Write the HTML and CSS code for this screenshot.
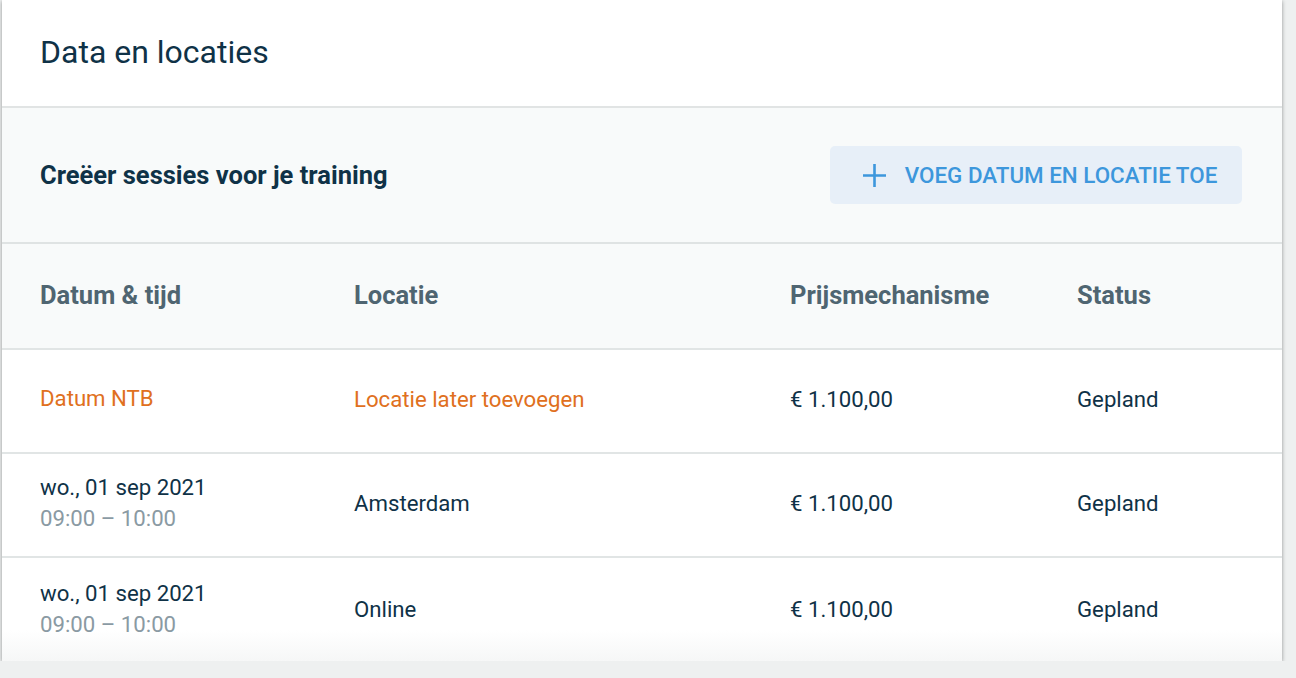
FILE: index.html
```html
<!DOCTYPE html>
<html lang="nl">
<head>
<meta charset="utf-8">
<link rel="stylesheet" href="styles.css">
</head>
<body>
<div class="card">
  <div class="card-title">Data en locaties</div>
  <div class="create-bar">
    <div class="create-text">Creëer sessies voor je training</div>
    <button class="add-btn">
      <svg class="plus" width="23" height="23" viewBox="0 0 23 23"><path d="M11.5 0v23M0 11.5h23" stroke="currentColor" stroke-width="2.6" fill="none"/></svg>
      <span>VOEG DATUM EN LOCATIE TOE</span>
    </button>
  </div>
  <div class="row head">
    <div class="c1">Datum &amp; tijd</div>
    <div class="c2">Locatie</div>
    <div class="c3">Prijsmechanisme</div>
    <div class="c4">Status</div>
  </div>
  <div class="row">
    <div class="c1 warn">Datum NTB</div>
    <div class="c2 warn">Locatie later toevoegen</div>
    <div class="c3">€ 1.100,00</div>
    <div class="c4">Gepland</div>
  </div>
  <div class="row">
    <div class="c1"><div>wo., 01 sep 2021</div><div class="time">09:00 – 10:00</div></div>
    <div class="c2">Amsterdam</div>
    <div class="c3">€ 1.100,00</div>
    <div class="c4">Gepland</div>
  </div>
  <div class="row last">
    <div class="c1"><div>wo., 01 sep 2021</div><div class="time">09:00 – 10:00</div></div>
    <div class="c2">Online</div>
    <div class="c3">€ 1.100,00</div>
    <div class="c4">Gepland</div>
  </div>
</div>
</body>
</html>
```
FILE: styles.css
```css
html, body {
  margin: 0;
  padding: 0;
  background: #eef0f0;
  font-family: Roboto, "Liberation Sans", sans-serif;
  color: #0f3247;
}
.card {
  width: 1280px;
  margin-left: 2px;
  background: #fff;
  box-shadow: 0 1px 4px rgba(0,0,0,0.4);
}
.card-title {
  height: 108px;
  box-sizing: border-box;
  padding-left: 38px;
  padding-bottom: 2px;
  display: flex;
  align-items: center;
  font-size: 32px;
  font-weight: 400;
  border-bottom: 2px solid #e1e4e4;
}
.create-bar {
  height: 136px;
  box-sizing: border-box;
  background: #f8fafa;
  border-bottom: 2px solid #dfe3e3;
  display: flex;
  align-items: center;
  justify-content: space-between;
  padding: 0 40px 0 38px;
}
.create-text {
  font-size: 25.5px;
  font-weight: 700;
}
.add-btn {
  width: 412px;
  height: 58px;
  border: none;
  border-radius: 5px;
  background: #e7eff8;
  color: #3d97dc;
  font-family: Roboto, "Liberation Sans", sans-serif;
  font-size: 22.4px;
  font-weight: 500;
  display: flex;
  align-items: center;
  justify-content: center;
  gap: 19px;
  padding: 0 0 0 8px;
}
.plus { display: block; }
.row {
  height: 104px;
  box-sizing: border-box;
  display: flex;
  align-items: center;
  padding-left: 38px;
  padding-bottom: 5px;
  font-size: 22.2px;
  border-bottom: 2px solid #e1e5e5;
}
.row.head {
  height: 106px;
  padding-bottom: 2px;
  background: #f8fafa;
  color: #4f6571;
  font-weight: 700;
  font-size: 25.5px;
}
.row.last {
  height: 103px;
  padding-bottom: 1px;
  border-bottom: none;
  background: linear-gradient(#fff 70%, #f6f7f7);
}
.c1 { width: 314px; line-height: 31px; }
.c2 { width: 436px; }
.c3 { width: 287px; }
.c4 { flex: 1; }
.warn { color: #e07020; }
.time { color: #8a9aa3; }
```
